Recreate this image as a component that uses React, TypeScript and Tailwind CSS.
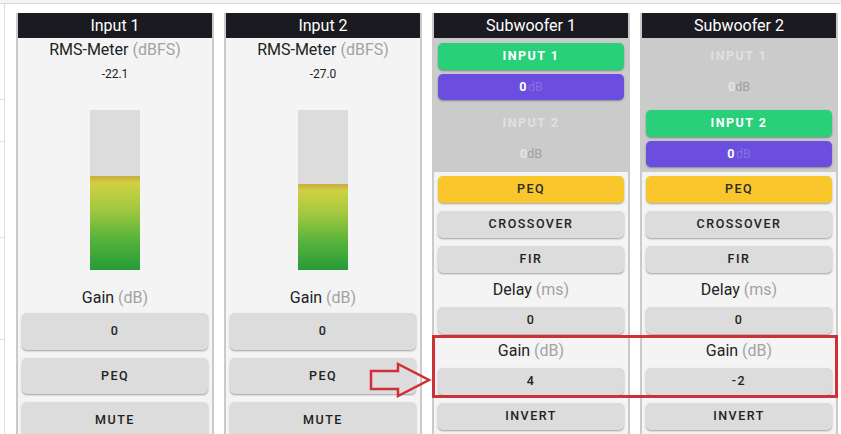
import React from "react";

const font = { fontFamily: "Roboto, 'Open Sans', 'Liberation Sans', sans-serif" };

function Btn({ children, tone = "gray", h = "h-[27px]" }: { children: React.ReactNode; tone?: string; h?: string }) {
  const tones: Record<string, string> = {
    gray: "bg-[#dcdcdc] text-[#222] font-medium",
    yellow: "bg-[#f9c62c] text-[#2a2a2a] font-medium",
    green: "bg-[#28d07a] text-white font-bold",
    purple: "bg-[#6b4de0] text-white font-bold",
  };
  return (
    <div
      className={`${h} ${tones[tone]} mx-[4px] flex items-center justify-center rounded-[5px] text-[12.5px] tracking-[1.5px] shadow-[0_1px_2px_rgba(0,0,0,0.35)]`}
    >
      {children}
    </div>
  );
}

function Label({ name, unit, h }: { name: string; unit: string; h: string }) {
  return (
    <div className={`${h} flex items-center justify-center text-[16px] text-[#222]`}>
      {name}&nbsp;<span className="text-[#a3a3a3]">({unit})</span>
    </div>
  );
}

function Header({ title }: { title: string }) {
  return (
    <div className="flex h-[25px] items-center justify-center bg-[#1b1a21] text-[16px] text-white">{title}</div>
  );
}

function InputColumn({ title, value, empty }: { title: string; value: string; empty: number }) {
  return (
    <div className="h-[440px] w-[198px] border-x-2 border-[#cacaca] bg-[#f4f4f4]">
      <Header title={title} />
      <div className="mt-[2px] flex h-[20px] items-center justify-center text-[16px] text-[#222]">
        RMS-Meter&nbsp;<span className="text-[#a3a3a3]">(dBFS)</span>
      </div>
      <div className="mt-[7px] flex h-[14px] items-center justify-center text-[12px] text-[#222]">{value}</div>
      <div className="mx-auto mt-[29px] flex h-[160px] w-[50px] flex-col bg-[#dcdcdc]">
        <div style={{ height: empty }} />
        <div className="flex-1 bg-[linear-gradient(to_bottom,#c9ae3e_0%,#cfd142_8%,#a2c840_35%,#5cb43c_65%,#269b38_100%)]" />
      </div>
      <div className="mt-[14px]">
        <Label name="Gain" unit="dB" h="h-[28px]" />
      </div>
      <div className="mt-[1px] flex flex-col gap-[8px]">
        <Btn h="h-[37px]">0</Btn>
        <Btn h="h-[36px]">PEQ</Btn>
        <Btn h="h-[36px]">MUTE</Btn>
      </div>
    </div>
  );
}

function Route({ name, active }: { name: string; active: boolean }) {
  if (active) {
    return (
      <div className="flex flex-col gap-[4px]">
        <Btn tone="green">{name}</Btn>
        <Btn tone="purple" h="h-[26px]">
          <span className="font-bold">0</span>
          <span className="font-normal tracking-normal text-[#8570e6]">dB</span>
        </Btn>
      </div>
    );
  }
  return (
    <div className="flex flex-col gap-[4px]">
      <div className="flex h-[27px] items-center justify-center text-[12.5px] font-bold tracking-[1.5px] text-[#e0e0e0]">
        {name}
      </div>
      <div className="flex h-[26px] items-center justify-center text-[12.5px]">
        <span className="font-bold text-[#e6e6e6]">0</span>
        <span className="text-[#a0a0a0]">dB</span>
      </div>
    </div>
  );
}

function SubColumn({ title, active, gain }: { title: string; active: number; gain: string }) {
  return (
    <div className="h-[440px] w-[198px] border-x-2 border-[#cacaca] bg-[#f4f4f4]">
      <Header title={title} />
      <div className="flex h-[134px] flex-col gap-[10px] bg-[#cbcbcb] py-[5px]">
        <Route name="INPUT 1" active={active === 1} />
        <Route name="INPUT 2" active={active === 2} />
      </div>
      <div className="mt-[4px] flex flex-col gap-[8px]">
        <Btn tone="yellow">PEQ</Btn>
        <Btn>CROSSOVER</Btn>
        <Btn>FIR</Btn>
      </div>
      <Label name="Delay" unit="ms" h="h-[34px]" />
      <Btn>0</Btn>
      <Label name="Gain" unit="dB" h="h-[34px]" />
      <Btn>{gain}</Btn>
      <div className="mt-[8px]">
        <Btn>INVERT</Btn>
      </div>
    </div>
  );
}

export default function App() {
  return (
    <div className="relative h-[434px] w-[841px] overflow-hidden bg-white" style={font}>
      <div className="h-[4px] border-b border-[#dcdcdc] bg-[#f3f3f3]" />
      <div className="flex">
        <div className="flex w-[5px] flex-col border-r border-[#dedede]">
          <div className="h-[96px] border-b border-[#e2e2e2]" />
          <div className="h-[42px] border-b border-[#e2e2e2]" />
          <div className="h-[96px] border-b border-[#e2e2e2]" />
          <div className="h-[102px] border-b border-[#e2e2e2]" />
        </div>
        <div className="ml-[11px] mt-[9px] flex gap-[10px]">
          <InputColumn title="Input 1" value="-22.1" empty={66} />
          <InputColumn title="Input 2" value="-27.0" empty={74} />
          <SubColumn title="Subwoofer 1" active={1} gain="4" />
          <SubColumn title="Subwoofer 2" active={2} gain="-2" />
        </div>
      </div>

      <div className="absolute left-[432px] top-[335px] h-[63px] w-[406px] border-[3px] border-[#cf2f37]" />
      <svg className="absolute left-0 top-0" width="841" height="434" viewBox="0 0 841 434" fill="none">
        <path d="M371 371 H398 V364 L429 380 L398 396 V389 H371 Z" stroke="#cf2f37" strokeWidth="2.5" strokeLinejoin="miter" />
      </svg>
    </div>
  );
}
